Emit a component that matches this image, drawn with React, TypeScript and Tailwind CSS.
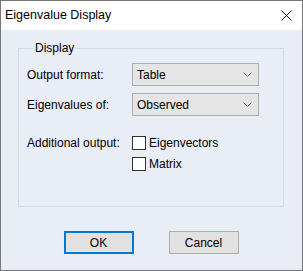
import React from 'react';

const Chevron = () => (
  <svg width="9" height="5" viewBox="0 0 9 5" className="shrink-0">
    <path d="M0.5 0.5 L4.5 4.5 L8.5 0.5" fill="none" stroke="#707070" strokeWidth="1" />
  </svg>
);

const Select = ({ value }: { value: string }) => (
  <div className="w-[127px] h-[23px] bg-[#e5e5e5] border border-[#adadad] flex items-center justify-between pl-[4px] pr-[6px]">
    <span>{value}</span>
    <Chevron />
  </div>
);

const Checkbox = ({ label }: { label: string }) => (
  <label className="flex items-center gap-[3px] h-[14px]">
    <span className="w-[14px] h-[14px] bg-white border border-[#333333]" />
    <span>{label}</span>
  </label>
);

const Button = ({ label, primary }: { label: string; primary?: boolean }) => (
  <button
    className={
      primary
        ? 'w-[70px] h-[23px] bg-[#e1e1e1] border-2 border-[#0078d7] flex items-center justify-center'
        : 'w-[70px] h-[23px] bg-[#e1e1e1] border border-[#adadad] flex items-center justify-center'
    }
  >
    {label}
  </button>
);

export default function App() {
  return (
    <div className="w-[303px] h-[271px] border border-[#767676] bg-[#e9eef6] flex flex-col text-[12px] text-black font-['Liberation_Sans',Arial,sans-serif]">
      <div className="h-[29px] bg-white flex items-center justify-between pl-[4px] pr-[10px] shrink-0">
        <span className="text-[12.5px]">Eigenvalue Display</span>
        <svg width="11" height="11" viewBox="0 0 11 11">
          <path d="M0.5 0.5 L10.5 10.5 M10.5 0.5 L0.5 10.5" fill="none" stroke="#111" strokeWidth="1" />
        </svg>
      </div>

      <div className="pt-[11px] pl-[17px]">
        <fieldset className="w-[266px] h-[166px] border border-[#d3d9e1] pl-[8px] pt-[8px]">
          <legend className="ml-[6px] px-[2px] leading-[14px]">Display</legend>
          <div className="flex flex-col gap-[7px]">
            <div className="flex items-center">
              <span className="w-[105px]">Output format:</span>
              <Select value="Table" />
            </div>
            <div className="flex items-center">
              <span className="w-[105px]">Eigenvalues of:</span>
              <Select value="Observed" />
            </div>
            <div className="flex items-start mt-[13px]">
              <span className="w-[105px] leading-[14px]">Additional output:</span>
              <div className="flex flex-col gap-[7px]">
                <Checkbox label="Eigenvectors" />
                <Checkbox label="Matrix" />
              </div>
            </div>
          </div>
        </fieldset>
      </div>

      <div className="flex justify-center gap-[35px] mt-[24px] pr-[1px]">
        <Button label="OK" primary />
        <Button label="Cancel" />
      </div>
    </div>
  );
}
